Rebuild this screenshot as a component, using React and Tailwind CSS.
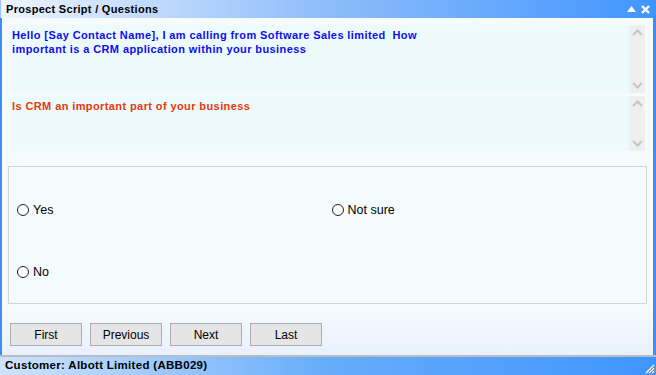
import React from 'react';

const font = { fontFamily: '"Liberation Sans", Arial, sans-serif' };

function ScrollBar() {
  return (
    <div className="w-[16px] shrink-0 bg-[#efefef] flex flex-col justify-between items-center py-[4px]">
      <svg width="11" height="7" viewBox="0 0 11 7">
        <path d="M1 6 L5.5 1.5 L10 6" fill="none" stroke="#c4c4c4" strokeWidth="2" />
      </svg>
      <svg width="11" height="7" viewBox="0 0 11 7">
        <path d="M1 1 L5.5 5.5 L10 1" fill="none" stroke="#c4c4c4" strokeWidth="2" />
      </svg>
    </div>
  );
}

function Radio({ label }) {
  return (
    <label className="flex items-center gap-[4px] text-[12.5px] leading-[14px] text-black">
      <span className="w-[12px] h-[12px] rounded-full border border-[#222] bg-white inline-block" />
      {label}
    </label>
  );
}

function NavButton({ label }) {
  return (
    <button className="w-[72px] h-[23px] bg-[#e5e5e5] border border-[#adadad] text-[12px] text-black">
      {label}
    </button>
  );
}

export default function App() {
  return (
    <div style={font} className="w-[656px] h-[375px] flex flex-col overflow-hidden bg-[#f6fcfe]">
      <div className="h-[18px] shrink-0 flex items-center justify-between pl-[5px] pr-[6px] bg-gradient-to-r from-[#eef4fd] via-[#8cbcf9] to-[#3f95ff] border-l border-[#9cc4f6]">
        <span className="text-[11px] font-bold tracking-[0.3px] text-black">Prospect Script / Questions</span>
        <div className="flex items-center gap-[5px] text-white">
          <svg width="9" height="6" viewBox="0 0 9 6"><path d="M0 6 L4.5 0 L9 6 Z" fill="#fff" /></svg>
          <svg width="9" height="9" viewBox="0 0 9 9"><path d="M1 1 L8 8 M8 1 L1 8" stroke="#fff" strokeWidth="2.4" /></svg>
        </div>
      </div>
      <div className="flex-1 flex flex-col border-l-2 border-r-[3px] border-[#3f8ff3]">
        <div className="flex flex-col pl-[8px] pr-[8px] pt-[7px] gap-[3px]">
          <div className="flex h-[68px]">
            <div className="flex-1 bg-[#eefbfc] px-[2px] pt-[3px] text-[11px] font-bold tracking-[0.4px] leading-[14px] text-[#0c0cf2]">
              Hello [Say Contact Name], I am calling from Software Sales limited&nbsp; How<br />
              important is a CRM application within your business
            </div>
            <ScrollBar />
          </div>
          <div className="flex h-[55px]">
            <div className="flex-1 bg-[#eefbfc] px-[2px] pt-[3px] text-[11px] font-bold tracking-[0.4px] leading-[14px] text-[#e8380c]">
              Is CRM an important part of your business
            </div>
            <ScrollBar />
          </div>
        </div>
        <div className="mt-[15px] mx-[6px] h-[138px] border border-[#d2d5d8] bg-[#f4fcfe] flex flex-col gap-[48px] pt-[36px] pl-[8px]">
          <div className="grid grid-cols-2">
            <Radio label="Yes" />
            <Radio label="Not sure" />
          </div>
          <div className="grid grid-cols-2">
            <Radio label="No" />
          </div>
        </div>
        <div className="flex-1 flex items-end gap-[8px] pl-[8px] pb-[9px] bg-gradient-to-b from-[#f6fbfe] to-[#e9f1fd]">
          <NavButton label="First" />
          <NavButton label="Previous" />
          <NavButton label="Next" />
          <NavButton label="Last" />
        </div>
      </div>
      <div className="relative h-[20px] shrink-0 flex items-center pl-[5px] border-t-2 border-[#b9bcc2] bg-gradient-to-r from-[#cfe3fb] via-[#66acfb] to-[#3f95ff]">
        <span className="text-[11.5px] font-bold tracking-[0.3px] text-black">Customer: Albott Limited (ABB029)</span>
        <svg className="absolute right-[1px] bottom-[1px]" width="12" height="12" viewBox="0 0 12 12">
          <path d="M11 3 L3 11 M11 6 L6 11 M11 9 L9 11" stroke="#fff" strokeWidth="1.2" />
          <path d="M12 4 L4 12 M12 7 L7 12 M12 10 L10 12" stroke="#a08a70" strokeWidth="1" />
        </svg>
      </div>
    </div>
  );
}
